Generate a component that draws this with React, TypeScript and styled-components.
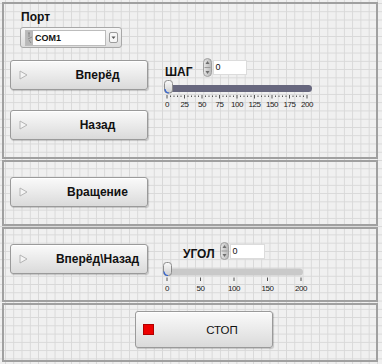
import React from "react";
import styled, { createGlobalStyle } from "styled-components";

const GlobalStyle = createGlobalStyle`
  html, body {
    margin: 0;
    padding: 0;
  }
  body {
    background-color: #f0f0f0;
    background-image:
      linear-gradient(to right, #d8d8d8 1px, transparent 1px),
      linear-gradient(to bottom, #d8d8d8 1px, transparent 1px);
    background-size: 8.27px 8.27px;
    background-position: 5px 3px;
    font-family: "Liberation Sans", Arial, sans-serif;
    color: #111;
  }
`;

type Tick = { x: number; label?: string; major: boolean };

const makeScale = (
  max: number,
  majorStep: number,
  minorStep: number,
  x0: number,
  x1: number
): Tick[] => {
  const out: Tick[] = [];
  for (let v = 0; v <= max; v += minorStep) {
    const x = x0 + ((x1 - x0) * v) / max;
    const major = v % majorStep === 0;
    out.push({ x, major, label: major ? String(v) : undefined });
  }
  return out;
};

const Triangle = () => (
  <svg width="9" height="10" viewBox="0 0 9 10">
    <path d="M1 1 L8 5 L1 9 Z" fill="#f4f4f4" stroke="#b4b4b4" strokeWidth="1" strokeLinejoin="round" />
  </svg>
);

const StopSquare = () => (
  <svg width="11" height="11" viewBox="0 0 11 11">
    <rect x="0.5" y="0.5" width="10" height="10" fill="#ee0000" stroke="#b00000" />
  </svg>
);

const SpinnerIcon = ({ h }: { h: number }) => (
  <svg width="9" height={h} viewBox={`0 0 9 ${h}`}>
    <defs>
      <linearGradient id={`sp${h}`} x1="0" y1="0" x2="1" y2="0">
        <stop offset="0" stopColor="#e6e6e6" />
        <stop offset="1" stopColor="#b8b8b8" />
      </linearGradient>
    </defs>
    <rect x="0.5" y="0.5" width="8" height={h - 1} rx="4" fill={`url(#sp${h})`} stroke="#a0a0a0" />
    <line x1="1.5" y1={h / 2} x2="7.5" y2={h / 2} stroke="#9a9a9a" />
    <path d={`M4.5 3 L6.5 6 L2.5 6 Z`} fill="#6e6e6e" />
    <path d={`M4.5 ${h - 3} L6.5 ${h - 6} L2.5 ${h - 6} Z`} fill="#6e6e6e" />
  </svg>
);

type SliderProps = {
  width: number;
  height: number;
  trackY: number;
  trackW: number;
  trackColor: string;
  thumbY: number;
  thumbH: number;
  ticks: Tick[];
  tickY: number;
  labelY: number;
};

const Slider = ({ width, height, trackY, trackW, trackColor, thumbY, thumbH, ticks, tickY, labelY }: SliderProps) => (
  <svg width={width} height={height} viewBox={`0 0 ${width} ${height}`} style={{ display: "block" }}>
    <defs>
      <linearGradient id={`th${width}`} x1="0" y1="0" x2="0" y2="1">
        <stop offset="0" stopColor="#fbfbfb" />
        <stop offset="1" stopColor="#cfcfcf" />
      </linearGradient>
    </defs>
    <rect x="1" y={trackY} width={trackW} height="7" rx="3.5" fill={trackColor} />
    <rect x="0.5" y={thumbY} width="8" height={thumbH} rx="3" fill={`url(#th${width})`} stroke="#8c8c8c" />
    <path
      d={`M1 ${thumbY + thumbH - 4} Q1.5 ${thumbY + thumbH} 5 ${thumbY + thumbH}`}
      fill="none"
      stroke="#2f63d6"
      strokeWidth="1.2"
    />
    {ticks.map((t, i) => (
      <line
        key={i}
        x1={t.x}
        x2={t.x}
        y1={t.major ? tickY : tickY + 0.5}
        y2={t.major ? tickY + 3.5 : tickY + 2}
        stroke="#444"
        strokeWidth="0.9"
      />
    ))}
    {ticks
      .filter(t => t.label)
      .map((t, i) => (
        <text
          key={`l${i}`}
          x={t.x}
          y={labelY}
          textAnchor="middle"
          fontFamily="Liberation Sans, Arial, sans-serif"
          fontSize="8"
          letterSpacing="-0.4"
          fill="#222"
        >
          {t.label}
        </text>
      ))}
  </svg>
);

const App = () => {
  const stepTicks = makeScale(200, 25, 5, 3, 143);
  const angleTicks = makeScale(200, 50, 50, 4, 138);

  return (
    <>
      <GlobalStyle />
      <Panel>
        <Frame $h={157}>
          <LeftCol>
            <BoldLabel $ml={11}>Порт</BoldLabel>
            <Combo>
              <Field>
                <IoTag>
                  <svg width="6" height="14" viewBox="0 0 6 14">
                    <path d="M1 2 L3 2 M2 2 L2 6 M1 8 L5 6 M2 9 L4 12" stroke="#7d7d7d" strokeWidth="0.8" fill="none" />
                  </svg>
                </IoTag>
                <ComboText>COM1</ComboText>
              </Field>
              <DropBtn>
                <svg width="7" height="9" viewBox="0 0 7 9">
                  <path d="M1.5 3.5 L5.5 3.5 L3.5 6 Z" fill="#555" />
                </svg>
              </DropBtn>
            </Combo>
            <PanelButton $w={138} $h={30} $mt={12}>
              <IconSlot $ml={8}><Triangle /></IconSlot>
              <ButtonText $ml={20}>Вперёд</ButtonText>
            </PanelButton>
            <PanelButton $w={138} $h={30} $mt={20}>
              <IconSlot $ml={8}><Triangle /></IconSlot>
              <ButtonText $ml={20}>Назад</ButtonText>
            </PanelButton>
          </LeftCol>
          <ControlGroup $ml={16} $mt={54}>
            <ControlRow $pl={1} $gap={10} $h={19}>
              <BoldLabel $mb={-2}>ШАГ</BoldLabel>
              <Numeric>
                <SpinnerIcon h={19} />
                <NumBox>0</NumBox>
              </Numeric>
            </ControlRow>
            <SliderWrap $mt={3}>
              <Slider
                width={152}
                height={30}
                trackY={5}
                trackW={147}
                trackColor="#67677e"
                thumbY={0.5}
                thumbH={12.5}
                ticks={stepTicks}
                tickY={15}
                labelY={27}
              />
            </SliderWrap>
          </ControlGroup>
        </Frame>

        <Frame $h={66}>
          <PanelButton $w={138} $h={30} $mt={15}>
            <IconSlot $ml={8}><Triangle /></IconSlot>
            <ButtonText $ml={20}>Вращение</ButtonText>
          </PanelButton>
        </Frame>

        <Frame $h={75}>
          <PanelButton $w={138} $h={30} $mt={15}>
            <IconSlot $ml={8}><Triangle /></IconSlot>
            <ButtonText $ml={20}>Вперёд\Назад</ButtonText>
          </PanelButton>
          <ControlGroup $ml={15} $mt={13}>
            <ControlRow $pl={20} $gap={5} $h={18}>
              <BoldLabel $mb={-1}>УГОЛ</BoldLabel>
              <Numeric>
                <SpinnerIcon h={18} />
                <NumBox $w={35}>0</NumBox>
              </Numeric>
            </ControlRow>
            <SliderWrap $mt={1}>
              <Slider
                width={146}
                height={32}
                trackY={7.5}
                trackW={139}
                trackColor="#c9c9c9"
                thumbY={1.5}
                thumbH={13}
                ticks={angleTicks}
                tickY={16.5}
                labelY={30}
              />
            </SliderWrap>
          </ControlGroup>
        </Frame>

        <Frame $h={59}>
          <PanelButton $w={138} $h={37} $mt={6} $ml={125}>
            <IconSlot $ml={7}><StopSquare /></IconSlot>
            <ButtonText $ml={18} $weight={400} $size={11.5}>СТОП</ButtonText>
          </PanelButton>
        </Frame>
      </Panel>
    </>
  );
};

export default App;

const Panel = styled.main`
  box-sizing: border-box;
  width: 380px;
  padding: 2px 2px 0 2px;
  display: flex;
  flex-direction: column;
  gap: 1px;
`;

const Frame = styled.section<{ $h: number }>`
  box-sizing: border-box;
  width: 376px;
  height: ${p => p.$h}px;
  border: 2px solid #a0a0a0;
  display: flex;
  align-items: flex-start;
  padding-left: 6px;
`;

const LeftCol = styled.div`
  display: flex;
  flex-direction: column;
  width: 138px;
  padding-top: 6px;
`;

const BoldLabel = styled.span<{ $ml?: number; $mb?: number }>`
  font-weight: 700;
  font-size: 12px;
  line-height: 14px;
  height: 14px;
  margin-left: ${p => p.$ml ?? 0}px;
  margin-bottom: ${p => p.$mb ?? 0}px;
  color: #111;
`;

const Combo = styled.div`
  box-sizing: border-box;
  width: 102px;
  height: 21px;
  margin: 3px 0 0 10px;
  padding: 0 3px 0 4px;
  display: flex;
  align-items: center;
  border: 1px solid #a8a8a8;
  border-radius: 3px;
  background: linear-gradient(#f6f6f6, #dcdcdc);
`;

const Field = styled.div`
  box-sizing: border-box;
  width: 82px;
  height: 16px;
  display: flex;
  align-items: center;
  background: #fff;
  border: 1px solid #bcbcbc;
`;

const IoTag = styled.span`
  width: 7px;
  height: 14px;
  background: #b9b9b9;
  display: flex;
  align-items: center;
  justify-content: center;
`;

const ComboText = styled.span`
  margin-left: 2px;
  font-size: 9px;
  font-weight: 700;
  color: #111;
`;

const DropBtn = styled.span`
  box-sizing: border-box;
  margin-left: 3px;
  width: 9px;
  height: 11px;
  border: 1px solid #9c9c9c;
  border-radius: 2px;
  background: #f6f6f6;
  display: flex;
  align-items: center;
  justify-content: center;
`;

const PanelButton = styled.button<{ $w: number; $h: number; $mt: number; $ml?: number }>`
  box-sizing: border-box;
  width: ${p => p.$w}px;
  height: ${p => p.$h}px;
  margin: ${p => p.$mt}px 0 0 ${p => p.$ml ?? 0}px;
  padding: 0;
  display: flex;
  align-items: center;
  border: 1px solid #9a9a9a;
  border-radius: 3px;
  background: linear-gradient(#fafafa 0%, #ececec 45%, #dadada 100%);
  box-shadow: inset 0 1px 0 #ffffff, 1px 1px 1px rgba(0, 0, 0, 0.18);
  font-family: "Liberation Sans", Arial, sans-serif;
  cursor: pointer;
  flex-shrink: 0;
`;

const IconSlot = styled.span<{ $ml: number }>`
  margin-left: ${p => p.$ml}px;
  display: flex;
  align-items: center;
`;

const ButtonText = styled.span<{ $ml: number; $weight?: number; $size?: number }>`
  flex: 1;
  margin-left: ${p => p.$ml}px;
  text-align: center;
  font-size: ${p => p.$size ?? 12}px;
  font-weight: ${p => p.$weight ?? 700};
  color: #111;
  white-space: nowrap;
`;

const ControlGroup = styled.div<{ $ml: number; $mt: number }>`
  display: flex;
  flex-direction: column;
  margin-left: ${p => p.$ml}px;
  margin-top: ${p => p.$mt}px;
`;

const ControlRow = styled.div<{ $pl: number; $gap: number; $h: number }>`
  display: flex;
  align-items: flex-end;
  height: ${p => p.$h}px;
  padding-left: ${p => p.$pl}px;
  gap: ${p => p.$gap}px;
`;

const Numeric = styled.div`
  display: flex;
  align-items: center;
  gap: 1px;
  align-self: stretch;
`;

const NumBox = styled.span<{ $w?: number }>`
  box-sizing: border-box;
  width: ${p => p.$w ?? 34}px;
  height: 15px;
  padding-left: 2px;
  background: #fff;
  border: 1px solid #dcdcdc;
  font-size: 9px;
  line-height: 12px;
  color: #111;
`;

const SliderWrap = styled.div<{ $mt: number }>`
  margin-top: ${p => p.$mt}px;
`;
